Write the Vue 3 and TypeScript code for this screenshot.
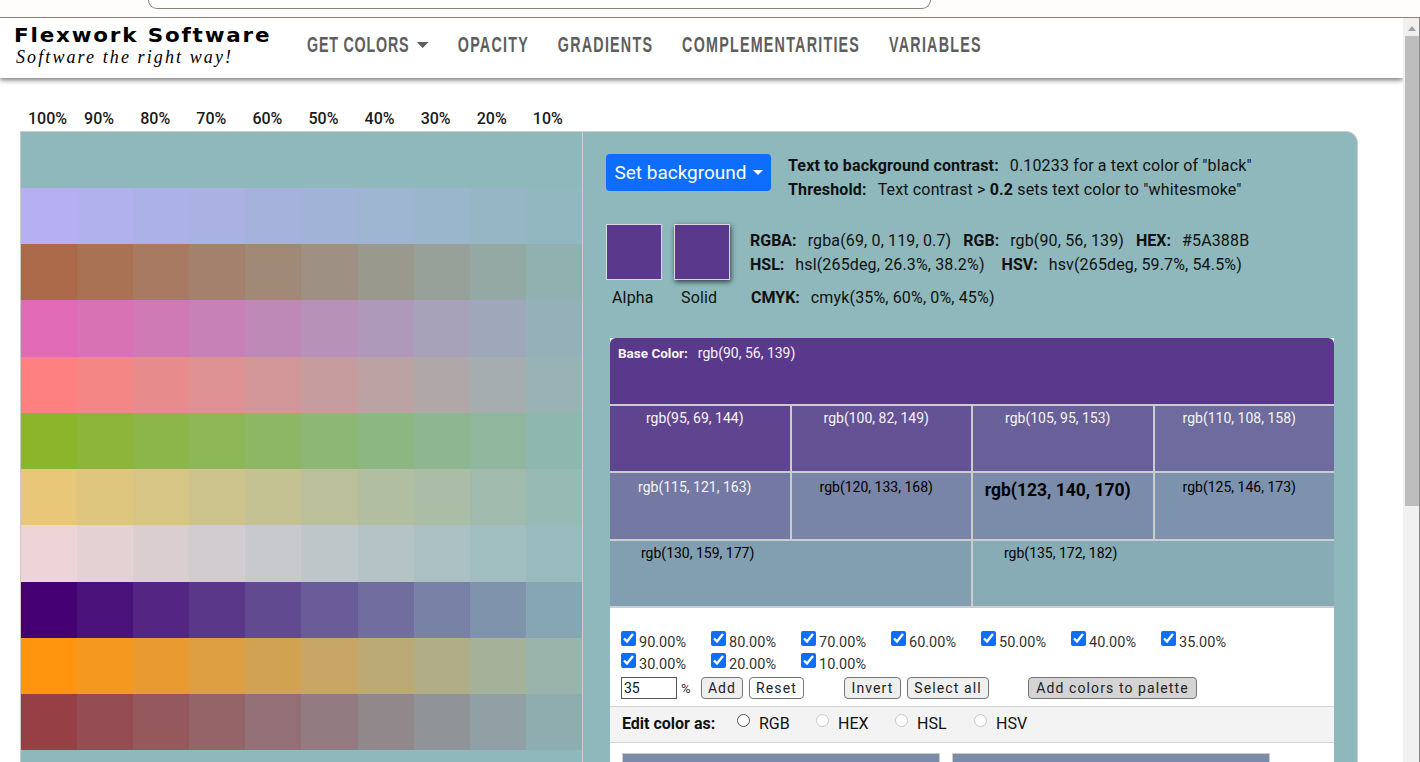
<script setup lang="ts">
type RGB = [number, number, number]
const bg: RGB = [142, 184, 187]
const alphas = [1, 0.9, 0.8, 0.7, 0.6, 0.5, 0.4, 0.3, 0.2, 0.1]
const bases: RGB[] = [
  [180, 176, 242],
  [173, 106, 74],
  [224, 106, 180],
  [255, 128, 128],
  [140, 181, 44],
  [232, 200, 120],
  [238, 212, 215],
  [69, 0, 116],
  [255, 148, 14],
  [150, 64, 70],
]
const rows = bases.map((c) =>
  alphas.map((a) => {
    const m = c.map((v, i) => Math.round(v * a + bg[i] * (1 - a)))
    return `rgb(${m[0]}, ${m[1]}, ${m[2]})`
  }),
)
const shades = [
  { t: 'rgb(95, 69, 144)', l: true },
  { t: 'rgb(100, 82, 149)', l: true },
  { t: 'rgb(105, 95, 153)', l: true },
  { t: 'rgb(110, 108, 158)', l: true },
  { t: 'rgb(115, 121, 163)', l: true, r2: true },
  { t: 'rgb(120, 133, 168)', l: false, r2: true },
  { t: 'rgb(123, 140, 170)', l: false, big: true },
  { t: 'rgb(125, 146, 173)', l: false, r2: true },
]
const checks = ['90.00%', '80.00%', '70.00%', '60.00%', '50.00%', '40.00%', '35.00%', '30.00%', '20.00%', '10.00%']
const modes = ['RGB', 'HEX', 'HSL', 'HSV']
const navs = ['OPACITY', 'GRADIENTS', 'COMPLEMENTARITIES', 'VARIABLES']
</script>

<template>
  <div class="window">
    <div class="chrome"><div class="pill"></div></div>
    <div class="viewport">
      <div class="page">
        <header class="nav">
          <div class="brand">
            <div class="brand-name">Flexwork Software</div>
            <div class="brand-tag">Software the right way!</div>
          </div>
          <nav class="links">
            <a class="link first">GET COLORS<span class="caret"></span></a>
            <a v-for="n in navs" :key="n" class="link">{{ n }}</a>
          </nav>
        </header>

        <main class="main">
          <div class="left">
            <div class="pcts">
              <span v-for="a in alphas" :key="a" class="pct">{{ Math.round(a * 100) }}%</span>
            </div>
            <div class="ramp">
              <div class="ramp-gap"></div>
              <div v-for="(r, i) in rows" :key="i" class="ramp-row">
                <div v-for="(c, j) in r" :key="j" class="ramp-cell" :style="{ background: c }"></div>
              </div>
              <div class="ramp-gap"></div>
            </div>
          </div>

          <section class="panel">
            <div class="top">
              <button class="bg-btn">Set background<span class="bg-caret"></span></button>
              <div class="contrast">
                <div><b>Text to background contrast:</b><span class="v">0.10233 for a text color of "black"</span></div>
                <div><b>Threshold:</b><span class="v">Text contrast &gt; <b>0.2</b> sets text color to "whitesmoke"</span></div>
              </div>
            </div>

            <div class="info">
              <div class="swatches">
                <div class="sw-col"><div class="sw"></div><span class="alpha">Alpha</span></div>
                <div class="sw-col"><div class="sw shadow"></div><span class="solid">Solid</span></div>
              </div>
              <div class="values">
                <div class="vrow"><b>RGBA:</b><span>rgba(69, 0, 119, 0.7)</span><b>RGB:</b><span>rgb(90, 56, 139)</span><b>HEX:</b><span>#5A388B</span></div>
                <div class="vrow second"><b>HSL:</b><span>hsl(265deg, 26.3%, 38.2%)</span><b>HSV:</b><span>hsv(265deg, 59.7%, 54.5%)</span></div>
                <div class="vrow cmyk"><b>CMYK:</b><span>cmyk(35%, 60%, 0%, 45%)</span></div>
              </div>
            </div>

            <div class="card">
              <div class="shades">
                <div class="base"><b>Base Color:</b><span>rgb(90, 56, 139)</span></div>
                <div
                  v-for="s in shades"
                  :key="s.t"
                  class="shade"
                  :class="{ light: s.l, big: s.big, r2: s.r2 }"
                  :style="{ background: s.t }"
                >{{ s.t }}</div>
                <div class="shade wide" style="background: rgb(130, 159, 177)">rgb(130, 159, 177)</div>
                <div class="shade wide" style="background: rgb(135, 172, 182)">rgb(135, 172, 182)</div>
              </div>

              <div class="controls">
                <div class="checks">
                  <label v-for="c in checks" :key="c" class="check">
                    <input type="checkbox" checked /><span>{{ c }}</span>
                  </label>
                </div>
                <div class="actions">
                  <input class="num" type="text" value="35" />
                  <span class="pc">%</span>
                  <button class="btn add">Add</button>
                  <button class="btn reset">Reset</button>
                  <button class="btn invert">Invert</button>
                  <button class="btn selall">Select all</button>
                  <button class="btn palette">Add colors to palette</button>
                </div>
              </div>

              <div class="edit">
                <b>Edit color as:</b>
                <label v-for="(m, i) in modes" :key="m" class="radio" :class="{ off: i > 0 }">
                  <span class="dot"></span>{{ m }}
                </label>
              </div>

              <div class="editors">
                <div class="editor"></div>
                <div class="editor"></div>
              </div>
            </div>
          </section>
        </main>
      </div>

      <aside class="scrollbar">
        <div class="arrow"></div>
        <div class="thumb"></div>
      </aside>
    </div>
  </div>
</template>

<style>
html, body { margin: 0; height: 762px; overflow: hidden; background: #fff; }
</style>

<style scoped>
.window { width: 1420px; height: 762px; overflow: hidden; display: flex; flex-direction: column; font-family: Roboto, "Liberation Sans", sans-serif; color: #111; }
.chrome { height: 17px; flex: none; background: #fefdfb; border-bottom: 1px solid #8a8178; }
.pill { width: 781px; height: 8px; margin-left: 148px; border: 1px solid #8a8178; border-top: 0; border-radius: 0 0 14px 14px; background: #fff; }
.viewport { flex: 1; min-height: 0; display: flex; overflow: hidden; }
.page { width: 1403px; flex: none; overflow: hidden; }
.scrollbar { width: 17px; flex: none; background: #f0f0f0; border-right: 1px solid #8a8a8a; box-sizing: border-box; padding-left: 2px; }
.arrow { height: 18px; position: relative; }
.arrow::after { content: ""; position: absolute; left: 3px; top: 8px; border: 4px solid transparent; border-top: 0; border-bottom: 5px solid #a0a0a0; }
.thumb { height: 470px; width: 14px; background: #bdbdbd; }

.nav { height: 60px; background: #fff; box-shadow: 0 2px 5px rgba(0, 0, 0, 0.55); display: flex; position: relative; z-index: 1; }
.brand { margin-left: 14px; width: 293px; flex: none; padding-top: 7px; }
.brand-name { font-family: "DejaVu Sans", sans-serif; font-weight: 700; font-size: 19px; line-height: 20px; letter-spacing: 1.6px; color: #000; transform: scaleX(1.13); transform-origin: left center; white-space: nowrap; }
.brand-tag { font-family: "Liberation Serif", serif; font-style: italic; font-size: 18px; line-height: 20px; letter-spacing: 2.1px; color: #000; margin: 2px 0 0 2px; }
.links { display: flex; align-items: flex-start; gap: 44.5px; padding-top: 13.5px; transform: scaleX(0.65); transform-origin: left top; }
.link { font-family: "Liberation Sans", sans-serif; font-weight: 700; font-size: 22px; line-height: 26px; letter-spacing: 1.9px; color: #5e5e5e; display: flex; align-items: center; white-space: nowrap; }
.first { letter-spacing: 1.2px; }
.caret { margin-left: 12px; border: 6px solid transparent; border-left-width: 9px; border-right-width: 9px; border-top: 6px solid #5e5e5e; border-bottom: 0; }

.main { display: flex; padding-left: 20px; }
.left { width: 563px; flex: none; }
.pcts { display: flex; height: 53px; padding: 32px 0 0 8px; box-sizing: border-box; }
.pct { width: 56.1px; flex: none; font-size: 16px; font-weight: 500; line-height: 18px; color: #1a1a1a; }
.ramp { background: #8eb8bb; border-left: 1px solid #ccc; border-top: 1px solid #ccc; border-right: 1px solid #ccc; height: 640px; box-sizing: border-box; }
.ramp-gap { height: 56px; }
.ramp-row { display: flex; height: 56.22px; }
.ramp-cell { flex: 1; }

.panel { width: 775px; flex: none; margin-top: 53px; height: 640px; background: #8eb8bb; border-radius: 0 12px 0 0; border-top: 1px solid #ccc; border-right: 1px solid #ccc; box-sizing: border-box; padding: 22px 22px 0 23px; font-size: 16px; letter-spacing: 0.15px; }
.top { display: flex; }
.bg-btn { width: 165px; height: 37px; border: 0; border-radius: 4px; background: #0d6efd; color: #fff; font: 19px Roboto, sans-serif; padding: 0; display: flex; align-items: center; justify-content: center; }
.bg-caret { margin-left: 6px; border: 5px solid transparent; border-top: 5px solid #fff; border-bottom: 0; }
.contrast { margin-left: 17px; line-height: 24px; }
.v { margin-left: 11px; }
.info { display: flex; margin-top: 22px; }
.swatches { display: flex; gap: 12px; width: 144px; flex: none; }
.sw-col { display: flex; flex-direction: column; align-items: flex-start; gap: 9px; width: 56px; line-height: 18px; }
.alpha { margin-left: 6px; }
.solid { margin-left: 7px; }
.sw { width: 56px; height: 56px; box-sizing: border-box; background: #5a388b; border: 1px solid #d8d8e0; }
.shadow { box-shadow: 1px 2px 5px rgba(0, 0, 0, 0.65); }
.values { padding-top: 5px; }
.vrow { display: flex; line-height: 24px; height: 24px; }
.vrow b { margin-right: 11px; letter-spacing: 0; }
.vrow span { margin-right: 12px; }
.second span { margin-right: 17px; }
.cmyk { margin-top: 9px; margin-left: 1px; }
.card { margin: 28px 0 0 4px; width: 724px; background: #fff; }
.shades { display: grid; grid-template-columns: repeat(4, 1fr); grid-auto-rows: 65.5px; gap: 2px; background: #ccc; border-radius: 6px 6px 0 0; overflow: hidden; padding-bottom: 2px; letter-spacing: 0; }
.base { grid-column: 1 / -1; background: #5a388b; color: #f5f5f5; font-size: 14px; padding: 7px 8px; box-sizing: border-box; line-height: 17px; }
.base b { font-size: 13.5px; margin-right: 10px; }
.shade { font-size: 14px; line-height: 17px; padding: 4px 10px 0 0; text-align: center; color: #000; box-sizing: border-box; }
.shade.r2 { padding-top: 6px; }
.shade.light { color: #f5f5f5; }
.shade.big { font-size: 17.5px; font-weight: 700; padding-top: 7px; line-height: 20px; }
.shade.wide { grid-column: span 2; text-align: left; padding-left: 31px; }
.controls { padding: 22px 0 0 11px; height: 98px; box-sizing: border-box; }
.checks { display: flex; flex-wrap: wrap; height: 44px; letter-spacing: 0; }
.check { width: 90px; height: 22px; display: flex; font-size: 14.5px; color: #333; }
.check input { width: 15px; height: 15px; margin: 1px 3px 0 0; accent-color: #0d6efd; }
.check span { line-height: 20px; margin-top: 3px; }
.actions { display: flex; align-items: center; height: 22px; margin-top: 3px; font-size: 13px; color: #333; letter-spacing: 0; }
.num { width: 56px; height: 22px; box-sizing: border-box; border: 1px solid #555; font: 14px Roboto, sans-serif; padding: 0 2px; margin: 0; color: #111; }
.pc { margin: 0 8px 0 4px; width: 12px; }
.btn { height: 22px; box-sizing: border-box; border: 1px solid #767676; border-radius: 4px; background: #efefef; font: 14px Roboto, sans-serif; letter-spacing: 1.1px; padding: 0; color: #222; }
.add { width: 42px; }
.reset { width: 55px; margin-left: 6px; background: #fff; }
.invert { width: 57px; margin-left: 40px; margin-right: 6px; }
.selall { width: 82px; }
.palette { width: 169px; margin-left: 39px; background: #d4d4d4; }
.edit { height: 37px; box-sizing: border-box; background: #f3f3f3; border-top: 1px solid #d4d4d4; border-bottom: 1px solid #d4d4d4; display: flex; align-items: center; padding: 0 0 3px 12px; font-size: 16px; letter-spacing: 0; }
.edit b { width: 115px; }
.radio { width: 79px; display: flex; align-items: center; gap: 9px; }
.dot { width: 13px; height: 13px; box-sizing: border-box; border: 1px solid #555; border-radius: 50%; background: #fff; margin-top: -5px; }
.off .dot { border-color: #c8c8c8; }
.editors { display: flex; gap: 12px; padding: 10px 0 0 12px; }
.editor { width: 318px; height: 40px; box-sizing: border-box; background: #7b8caa; border: 1px solid #ccc; border-bottom: 0; }
</style>
